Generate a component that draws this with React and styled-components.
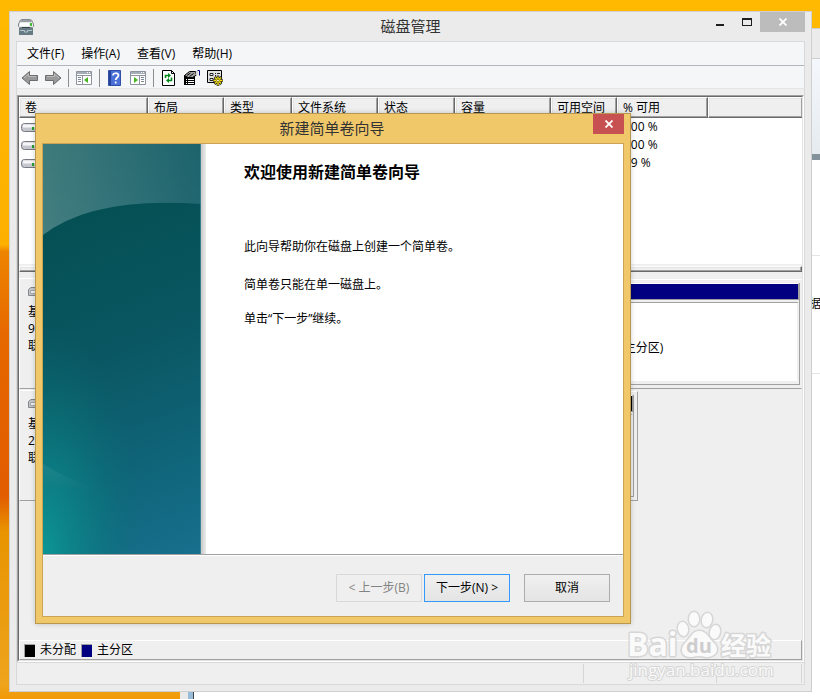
import React from "react";
import styled, { createGlobalStyle } from "styled-components";

const menus = ["文件(F)", "操作(A)", "查看(V)", "帮助(H)"];

const columns = [
  { name: "卷", width: 129 },
  { name: "布局", width: 76 },
  { name: "类型", width: 68 },
  { name: "文件系统", width: 86 },
  { name: "状态", width: 77 },
  { name: "容量", width: 96 },
  { name: "可用空间", width: 66 },
  { name: "% 可用", width: 91 },
];

const volumes = ["100 %", "100 %", "99 %"];

const App = () => {
  return (
    <Desktop>
      <GlobalStyle />
      <BackWindow>
        <BackTitle />
        <BackPanel />
        <BackPage>
          <BackRow />
          <BackRow>数据</BackRow>
        </BackPage>
      </BackWindow>

      <Window>
        <TitleBar>
          <ComputerIcon />
          <Title>磁盘管理</Title>
          <Controls>
            <ControlButton aria-label="最小化">
              <svg width="8" height="20">
                <path d="M0 13h8" stroke="#1e1e1e" strokeWidth="2" />
              </svg>
            </ControlButton>
            <ControlButton aria-label="最大化">
              <svg width="10" height="20">
                <path d="M0 6h10v8H0zM1 8v5h8V8z" fill="#1e1e1e" fillRule="evenodd" />
              </svg>
            </ControlButton>
            <CloseButton $width={45} $color="#bcbcbc" aria-label="关闭">
              <Cross />
            </CloseButton>
          </Controls>
        </TitleBar>

        <Frame>
          <MenuBar>
            {menus.map((menu) => (
              <MenuItem key={menu}>{menu}</MenuItem>
            ))}
          </MenuBar>
          <Toolbar>
            <Tool aria-label="后退">
              <ArrowIcon />
            </Tool>
            <Tool aria-label="前进">
              <ArrowIcon flip />
            </Tool>
            <Divider />
            <Tool aria-label="显示控制台树">
              <PaneIcon />
            </Tool>
            <Divider />
            <Tool aria-label="帮助">
              <HelpIcon />
            </Tool>
            <Tool aria-label="显示操作窗格">
              <PaneIcon flip />
            </Tool>
            <Divider />
            <Tool aria-label="刷新">
              <RefreshIcon />
            </Tool>
            <Tool aria-label="属性">
              <PropertiesIcon />
            </Tool>
            <Tool aria-label="设置">
              <SettingsIcon />
            </Tool>
          </Toolbar>

          <Sunken>
            <Pane>
              <VolumeList>
                <Table>
                  <colgroup>
                    {columns.map((column) => (
                      <col key={column.name} style={{ width: column.width }} />
                    ))}
                    <col />
                  </colgroup>
                  <thead>
                    <tr>
                      {columns.map((column) => (
                        <th key={column.name}>{column.name}</th>
                      ))}
                      <th />
                    </tr>
                  </thead>
                  <tbody>
                    {volumes.map((free, i) => (
                      <tr key={i}>
                        <td>
                          <DriveIcon />
                        </td>
                        <td colSpan={6} />
                        <td>{free}</td>
                        <td />
                      </tr>
                    ))}
                  </tbody>
                </Table>
              </VolumeList>
              <Splitter />
              <DiskView>
                <DiskRow>
                  <DiskLabel>
                    <SmallDiskIcon />
                    <span>基本</span>
                    <span>9</span>
                    <span>联机</span>
                  </DiskLabel>
                  <Partitions>
                    <Partition $width="440px">
                      <Bar $color="#000080" />
                      <PartitionBody />
                    </Partition>
                    <Partition>
                      <Bar $color="#000080" />
                      <PartitionBody>状态良好 (主分区)</PartitionBody>
                    </Partition>
                  </Partitions>
                </DiskRow>
                <DiskRow>
                  <DiskLabel>
                    <SmallDiskIcon />
                    <span>基本</span>
                    <span>2</span>
                    <span>联机</span>
                  </DiskLabel>
                  <Partitions $width="520px">
                    <Partition>
                      <Bar $color="#000000" />
                      <PartitionBody $color="#b4b4b8" />
                    </Partition>
                  </Partitions>
                </DiskRow>
              </DiskView>
              <Legend>
                <Swatch $color="#000000" />
                <span>未分配</span>
                <Swatch $color="#000080" />
                <span>主分区</span>
              </Legend>
            </Pane>
          </Sunken>
          <StatusBar>
            <StatusCell />
            <StatusCell $width="133px" />
            <StatusCell $width="85px" />
          </StatusBar>
        </Frame>
      </Window>

      <Dialog role="dialog" aria-labelledby="wizard-title">
        <DialogTitleBar>
          <DialogTitle id="wizard-title">新建简单卷向导</DialogTitle>
          <CloseButton $width={31} $color="#c75050" aria-label="关闭向导">
            <Cross />
          </CloseButton>
        </DialogTitleBar>
        <DialogFrame>
          <Wizard>
            <Banner />
            <BannerEdge />
            <WizardText>
              <h1>欢迎使用新建简单卷向导</h1>
              <p>此向导帮助你在磁盘上创建一个简单卷。</p>
              <p>简单卷只能在单一磁盘上。</p>
              <p>单击“下一步”继续。</p>
            </WizardText>
          </Wizard>
          <Buttons>
            <Button disabled>&lt; 上一步(B)</Button>
            <Button className="primary">下一步(N) &gt;</Button>
            <Button className="cancel">取消</Button>
          </Buttons>
        </DialogFrame>
      </Dialog>

      <Watermark />
    </Desktop>
  );
};

const Cross = () => (
  <svg width="8" height="8" viewBox="0 0 8 8">
    <path d="M0.5 0.5l7 7M7.5 0.5l-7 7" stroke="#fff" strokeWidth="1.8" />
  </svg>
);

const ComputerIcon = () => (
  <svg width="16" height="16" viewBox="0 0 16 16">
    <path d="M2.5 1l1-.5h9l1 .5 2 4v2.500l-1 1h-13l-1-1V5z" fill="#e6e8ea" stroke="#82888d" />
    <path d="M3 1h10l1 2H2z" fill="#989ea3" />
    <path d="M2 4h9v3H2z" fill="#fff" />
    <path d="M12 4h2v3h-2z" fill="#3ec12d" />
    <path d="M1 9h14v7H1z" fill="#667a84" />
    <path d="M2 11.500h4.500v1.500h3v-1.500H14" fill="none" stroke="#b4c4cc" />
    <path d="M4 8h8v1H4z" fill="#39454c" />
  </svg>
);

const ArrowIcon = ({ flip }) => (
  <svg width="18" height="16" viewBox="0 0 18 16">
    <path
      d="M1 8l7.500-6.500v4H16.500v5H8.500v4z"
      transform={flip ? "translate(18 0) scale(-1 1)" : undefined}
      fill="#999"
      stroke="#6c6c6c"
    />
    <path
      d="M3 8l4.500-4v2.500H15"
      transform={flip ? "translate(18 0) scale(-1 1)" : undefined}
      fill="none"
      stroke="#bcbcbc"
    />
  </svg>
);

const PaneIcon = ({ flip }) => (
  <svg width="16" height="14" viewBox="0 0 16 14">
    <path d="M0.500 0.500h15v13h-15z" fill="#fff" stroke="#8d949d" />
    <path d="M1 1h14v2H1z" fill="#a5aeb9" />
    <path d="M11 1.500h1M13 1.500h1" stroke="#fff" />
    <path d="M1 4.500h14" stroke="#8d949d" />
    {flip ? (
      <>
        <path d="M9.500 5v8" stroke="#8d949d" />
        <path d="M4 6l4 3-4 3z" fill="#45b51f" />
        <path d="M11 6.500h3M11 8.500h3M11 10.500h3" stroke="#7a8796" />
      </>
    ) : (
      <>
        <path d="M6.500 5v8" stroke="#8d949d" />
        <path d="M12 6l-4 3 4 3z" fill="#45b51f" />
        <path d="M2 6.500h3M2 8.500h3M2 10.500h3" stroke="#7a8796" />
      </>
    )}
  </svg>
);

const HelpIcon = () => (
  <svg width="13" height="16" viewBox="0 0 13 16">
    <path d="M0.500 0.500h12v15H0.500z" fill="#4a70d8" stroke="#3050a8" />
    <path d="M1 1h2v14H1z" fill="#24429c" />
    <path
      d="M5 5.500C5 2.500 10.500 2.500 10.500 5.300C10.500 7.500 7.700 7.500 7.700 10M7.700 11.500v2"
      fill="none"
      stroke="#fff"
      strokeWidth="1.700"
    />
  </svg>
);

const RefreshIcon = () => (
  <svg width="13" height="16" viewBox="0 0 13 16">
    <path d="M0.500 0.500h9l3 3v12h-12z" fill="#fff" stroke="#000" />
    <path d="M9.500 0.500v3h3" fill="none" stroke="#000" />
    <path d="M3.500 8V5.500h3M9.500 7.500v3h-3" fill="none" stroke="#008a18" strokeWidth="1.500" />
    <path d="M6 3l3 2.500L6 8zM7 8l-3 2.500L7 13z" fill="#008a18" />
  </svg>
);

const PropertiesIcon = () => (
  <svg width="17" height="16" viewBox="0 0 17 16">
    <path d="M1 5h11v10H1z" fill="#000" />
    <path d="M3 9.500h1M5 9.500h6M3 11.500h1M5 11.500h6M3 13.500h1M5 13.500h6" stroke="#fff" />
    <path d="M1.500 5.500L6.500 1.500h6l1 3.500-4 2.500H5z" fill="#a4a4a4" stroke="#000" />
    <path d="M4 5.500l3.500-2.500M6.500 6.500l4-3" stroke="#000" />
    <path d="M13 1h2v4h-2z" fill="#d8d8d8" />
    <path d="M14.500 0.500h2v5" fill="none" stroke="#000080" />
  </svg>
);

const SettingsIcon = () => (
  <svg width="16" height="16" viewBox="0 0 16 16">
    <path d="M0.500 0.500h14v12H0.500z" fill="#e2e2e2" stroke="#000" />
    <path d="M3 3.500h3v2H3zM3 8.500h3v2H3z" fill="#fff" stroke="#222" />
    <path d="M8 3.500h1M10 3.500h3M8 5.500h1" stroke="#222" />
    <path
      d="M11 5.500V16M6 10.500h10M7.500 7l7 7M14.500 7l-7 7"
      stroke="#222"
      strokeWidth="2.600"
    />
    <path d="M11 6.500v9M6.500 10.500h9M8 7.500l6 6M14 7.500l-6 6" stroke="#f2df14" strokeWidth="1.400" />
    <circle cx="11" cy="10.500" r="1.300" fill="#fff" stroke="#887a00" />
  </svg>
);

const DriveIcon = () => (
  <svg width="18" height="9" viewBox="0 0 18 9">
    <rect x="0.500" y="0.500" width="17" height="8" rx="3" fill="#c6c7ce" stroke="#777981" />
    <path d="M2 3h14" stroke="#f6f6f8" strokeWidth="3" />
    <path d="M11 5.500h2" stroke="#24a02c" strokeWidth="3" />
  </svg>
);

const SmallDiskIcon = () => (
  <svg width="14" height="9" viewBox="0 0 14 9">
    <path d="M3 0.500h8l2 2v6H0.500v-6z" fill="#c5c6ca" stroke="#84868c" />
    <path d="M2.500 3.500h10v3h-10z" fill="#eeeef1" stroke="#a4a6ac" />
  </svg>
);

// teal glass panel on the left of the wizard
const Banner = () => (
  <BannerArt viewBox="0 0 158 410" preserveAspectRatio="none" aria-hidden="true">
    <defs>
      <linearGradient id="deep" x1="0" y1="0" x2="158" y2="410" gradientUnits="userSpaceOnUse">
        <stop offset="0.15" stopColor="#044f52" />
        <stop offset="0.5" stopColor="#0a5763" />
        <stop offset="0.8" stopColor="#10667b" />
        <stop offset="1" stopColor="#186f8e" />
      </linearGradient>
      <linearGradient id="shine" x1="0" y1="0" x2="158" y2="60" gradientUnits="userSpaceOnUse">
        <stop offset="0" stopColor="#3f7b7c" />
        <stop offset="1" stopColor="#17606a" />
      </linearGradient>
      <radialGradient id="glow" cx="0" cy="0" r="1" gradientUnits="userSpaceOnUse" gradientTransform="translate(0 410) scale(100 230)">
        <stop offset="0" stopColor="#0c9696" />
        <stop offset="0.5" stopColor="#0a8585" stopOpacity="0.5" />
        <stop offset="1" stopColor="#047070" stopOpacity="0" />
      </radialGradient>
      <linearGradient id="haze" x1="0" y1="0" x2="0" y2="1">
        <stop offset="0" stopColor="#fff" stopOpacity="0" />
        <stop offset="1" stopColor="#fff" stopOpacity="0.06" />
      </linearGradient>
      <linearGradient id="arc" x1="0" y1="0" x2="0" y2="1">
        <stop offset="0" stopColor="#fff" stopOpacity="0.07" />
        <stop offset="1" stopColor="#fff" stopOpacity="0" />
      </linearGradient>
    </defs>
    <rect width="158" height="410" fill="url(#deep)" />
    <rect width="158" height="410" fill="url(#glow)" />
    <path d="M0 320Q28 338 60 346L0 346z" fill="url(#arc)" />
    <path d="M0 0H158V60Q50 52 0 91z" fill="url(#shine)" />
    <path d="M0 0H158V60Q50 52 0 91z" fill="url(#haze)" />
    <path d="M157.500 0V410" stroke="#4b919e" opacity="0.7" />
  </BannerArt>
);

const Watermark = () => (
  <Mark viewBox="0 0 150 74" aria-hidden="true">
    <g fill="#fcfcfc" stroke="#d2d2d2" strokeWidth="3" paintOrder="stroke" strokeLinejoin="round">
      <text x="0" y="47" fontSize="32" fontWeight="700">
        Bai
      </text>
      <ellipse cx="56" cy="20" rx="5" ry="7" transform="rotate(-10 56 20)" />
      <ellipse cx="67" cy="10" rx="5" ry="7" />
      <ellipse cx="80" cy="11" rx="5" ry="7" transform="rotate(10 80 11)" />
      <ellipse cx="88" cy="23" rx="5" ry="7" transform="rotate(15 88 23)" />
      <path d="M72 22C80 22 81 29 88 35C93 42 88 48 79 48Q72 46 65 48C55 49 52 41 58 34C64 29 65 22 72 22z" />
      <text x="94" y="46" fontSize="25" fontWeight="700">
        经验
      </text>
      <text x="2" y="67" fontSize="17" strokeWidth="2">
        jingyan.baidu.com
      </text>
    </g>
    <text x="59" y="44" fontSize="20" fontWeight="700" fill="#c8c8c8">
      du
    </text>
  </Mark>
);

const GlobalStyle = createGlobalStyle`
  * {
    box-sizing: border-box;
  }
  body {
    margin: 0;
    overflow: hidden;
    font: 12px/16px "Open Sans", "Noto Sans CJK SC", sans-serif;
    color: #000;
  }
  button {
    font: inherit;
    color: inherit;
    padding: 0;
    border: 0;
    background: none;
  }
  svg {
    display: block;
    flex: none;
  }
`;

const Desktop = styled.div`
  position: relative;
  min-height: 100vh;
  overflow: hidden;
  background: linear-gradient(
    #ffb900 0,
    #fdb000 35%,
    #ee8400 36%,
    #e66800 48%,
    #e25c00 71%,
    #e89400 76%,
    #eea41c 98%,
    #f29a06 100%
  );
  &::before {
    content: "";
    display: block;
    height: 28px;
    background: #ffb900;
  }
`;

const BackWindow = styled.div`
  position: absolute;
  inset: 28px -20px -20px 180px;
  border: 1px solid #cfcfcf;
  border-left: 8px solid #e9e9e9;
  background: #fff;
`;

const BackTitle = styled.div`
  height: 30px;
  background: #ebebeb;
  border-bottom: 1px solid #cfcfcf;
`;

const BackPanel = styled.div`
  height: 101px;
  background: linear-gradient(#f4f8fd, #e6ebf0);
  border-bottom: 6px solid #84929b;
`;

const BackPage = styled.div`
  height: calc(100% - 131px);
  border-left: 5px solid #98bbd8;
  box-shadow: inset 1px 0 #444;
  padding-right: 18px;
`;

const BackRow = styled.div`
  height: 96px;
  border-bottom: 1px solid #e4e4e4;
  text-align: right;
  line-height: 96px;
  & + & {
    height: 118px;
  }
`;

const Window = styled.section`
  position: absolute;
  inset: 11px 8px 7px 9px;
  display: flex;
  flex-direction: column;
  padding: 0 6px 6px;
  border: 1px solid #cfcfcf;
  background: #ebebeb;
`;

const TitleBar = styled.header`
  display: grid;
  grid-template-columns: 1fr auto 1fr;
  align-items: center;
  height: 29px;
  svg {
    margin-left: 2px;
  }
  button svg {
    margin: 0;
  }
`;

const Title = styled.h2`
  margin: 0;
  padding-bottom: 2px;
  font-size: 15px;
  font-weight: 400;
  line-height: 20px;
  color: #333;
`;

const Controls = styled.div`
  display: flex;
  align-self: start;
  justify-content: flex-end;
`;

const ControlButton = styled.button`
  display: flex;
  justify-content: center;
  width: 27px;
  height: 20px;
`;

const CloseButton = styled.button`
  display: flex;
  align-items: center;
  justify-content: center;
  width: ${(props) => props.$width}px;
  height: 20px;
  background: ${(props) => props.$color};
`;

const Frame = styled.div`
  flex: 1;
  display: flex;
  flex-direction: column;
  min-height: 0;
  border: 1px solid #d9d9d9;
  background: #efefef;
`;

const MenuBar = styled.nav`
  display: flex;
  gap: 17px;
  height: 24px;
  padding-left: 10px;
  background: #f5f6f8;
  border-bottom: 1px solid #b2b4bb;
`;

const MenuItem = styled.button`
  white-space: nowrap;
`;

const Toolbar = styled.div`
  display: flex;
  align-items: center;
  gap: 4px;
  height: 23px;
  margin-bottom: 6px;
  padding: 2px 0 0 3px;
  background: #f5f6f8;
  border-bottom: 1px solid #e4e5e8;
`;

const Tool = styled.button`
  display: flex;
  align-items: center;
  justify-content: center;
  width: 19px;
  height: 20px;
`;

const Divider = styled.span`
  width: 1px;
  height: 18px;
  margin: 0 1px 0 2px;
  background: #8d8d8d;
`;

const Sunken = styled.div`
  flex: 1;
  display: flex;
  min-height: 0;
  border: 1px solid;
  border-color: #a0a0a0 #fff #fff #a0a0a0;
`;

const Pane = styled.div`
  flex: 1;
  display: flex;
  flex-direction: column;
  min-width: 0;
  border: 1px solid;
  border-color: #696969 #e3e3e3 #e3e3e3 #696969;
`;

const VolumeList = styled.div`
  height: 167px;
  background: #fff;
`;

const Table = styled.table`
  width: 100%;
  table-layout: fixed;
  border-collapse: separate;
  border-spacing: 0;
  text-align: left;
  white-space: nowrap;
  th {
    height: 21px;
    padding: 0 0 0 5px;
    font-weight: 400;
    line-height: 16px;
    background: #efefef;
    border: 1px solid;
    border-color: #fff #696969 #696969 #fff;
    box-shadow: inset -1px -1px #a0a0a0, inset 1px 1px #e3e3e3;
  }
  th:last-child {
    border-right: 0;
  }
  td {
    height: 18px;
    padding: 0 0 0 7px;
    line-height: 18px;
  }
  td:first-child {
    padding-left: 2px;
  }
`;

const Splitter = styled.div`
  height: 6px;
  margin-top: 2px;
  border: 1px solid;
  border-color: #fff #696969 #696969 #fff;
  box-shadow: inset -1px -1px #a0a0a0, inset 1px 1px #e3e3e3;
`;

const DiskView = styled.div`
  flex: 1;
  display: flex;
  flex-direction: column;
  gap: 1px;
  min-height: 0;
  padding-top: 6px;
`;

const DiskRow = styled.div`
  display: flex;
  height: 111px;
`;

const DiskLabel = styled.div`
  display: flex;
  flex-direction: column;
  width: 99px;
  padding: 8px 0 0 8px;
  line-height: 17px;
  border: 1px solid;
  border-color: #fff #a0a0a0 #a0a0a0 #fff;
  svg {
    margin-bottom: 7px;
  }
`;

const Partitions = styled.div`
  display: flex;
  flex: ${(props) => (props.$width ? "none" : 1)};
  width: ${(props) => props.$width || "auto"};
  margin-top: 1px;
  padding: 3px ${(props) => (props.$width ? "3px" : "1px")} 3px 4px;
  border: 1px solid;
  border-color: #fff ${(props) => (props.$width ? "#a0a0a0" : "#efefef")} #a0a0a0 #fff;
`;

const Partition = styled.div`
  display: flex;
  flex-direction: column;
  flex: ${(props) => (props.$width ? "none" : 1)};
  width: ${(props) => props.$width || "auto"};
  border-right: 1px solid #a0a0a0;
  border-bottom: 1px solid #a0a0a0;
`;

const Bar = styled.div`
  height: 17px;
  background: ${(props) => props.$color};
  border: 1px solid;
  border-color: #fff #a0a0a0 #a0a0a0 #fff;
`;

const PartitionBody = styled.div`
  flex: 1;
  margin-top: 2px;
  padding: 37px 0 0 6px;
  background: ${(props) => props.$color || "#fff"};
  border-top: 1px solid #a0a0a0;
  border-right: 2px solid #efefef;
  border-bottom: 3px solid #efefef;
`;

const Legend = styled.div`
  display: flex;
  align-items: center;
  gap: 5px;
  height: 20px;
  padding-left: 4px;
  border: 1px solid;
  border-color: #fff #a0a0a0 #a0a0a0 #fff;
`;

const Swatch = styled.span`
  width: 11px;
  height: 13px;
  border: 1px solid #a0a0a0;
  border-width: 1px 0 0 1px;
  background: ${(props) => props.$color};
`;

const StatusBar = styled.footer`
  display: flex;
  height: 22px;
  padding: 1px 2px;
  border-top: 1px solid #d9d9d9;
`;

const StatusCell = styled.div`
  flex: ${(props) => (props.$width ? "none" : 1)};
  width: ${(props) => props.$width || "auto"};
  border-right: 1px solid #d5d5d5;
`;

const Dialog = styled.section`
  position: absolute;
  top: 113px;
  left: 35px;
  width: 596px;
  padding: 0 6px 6px;
  background: #f0c86a;
  border: 1px solid #b8974f;
  box-shadow: 0 0 5px rgba(0, 0, 0, 0.2);
`;

const DialogTitleBar = styled.header`
  display: grid;
  grid-template-columns: 1fr auto 1fr;
  height: 29px;
  button {
    grid-column: 3;
    justify-self: end;
  }
`;

const DialogTitle = styled.h2`
  grid-column: 2;
  margin: 0;
  padding-right: 2px;
  font-size: 15px;
  font-weight: 400;
  line-height: 28px;
  color: #333;
`;

const DialogFrame = styled.div`
  border: 1px solid #cba453;
  background: #efefef;
`;

const Wizard = styled.div`
  display: flex;
  height: 411px;
  background: #fff;
  border-bottom: 1px solid #a0a0a0;
`;

const BannerArt = styled.svg`
  width: 158px;
  height: 410px;
`;

const BannerEdge = styled.div`
  width: 5px;
  background: linear-gradient(90deg, #c9c9c9, #ececec);
`;

const WizardText = styled.div`
  padding: 16px 0 0 38px;
  h1 {
    margin: 0 0 55px;
    font-size: 16px;
    line-height: 24px;
  }
  p {
    margin: 0 0 18px;
    line-height: 16px;
  }
  p:first-of-type {
    margin-bottom: 22px;
  }
`;

const Buttons = styled.div`
  display: flex;
  justify-content: flex-end;
  gap: 2px;
  height: 61px;
  padding: 18px 13px 14px;
  border-top: 1px solid #fff;
`;

const Button = styled.button`
  && {
    width: 86px;
    height: 28px;
    white-space: nowrap;
    background: linear-gradient(#f0f0f0, #e4e4e4);
    border: 1px solid #acacac;
  }
  &&.primary {
    border-color: #3399ff;
  }
  &&.cancel {
    margin-left: 12px;
  }
  &&:disabled {
    color: #838383;
    background: #efefef;
    border-color: #d9d9d9;
  }
`;

const Mark = styled.svg`
  position: absolute;
  right: 43px;
  bottom: 16px;
  width: 150px;
  height: 74px;
  opacity: 0.85;
  pointer-events: none;
`;

export default App;
